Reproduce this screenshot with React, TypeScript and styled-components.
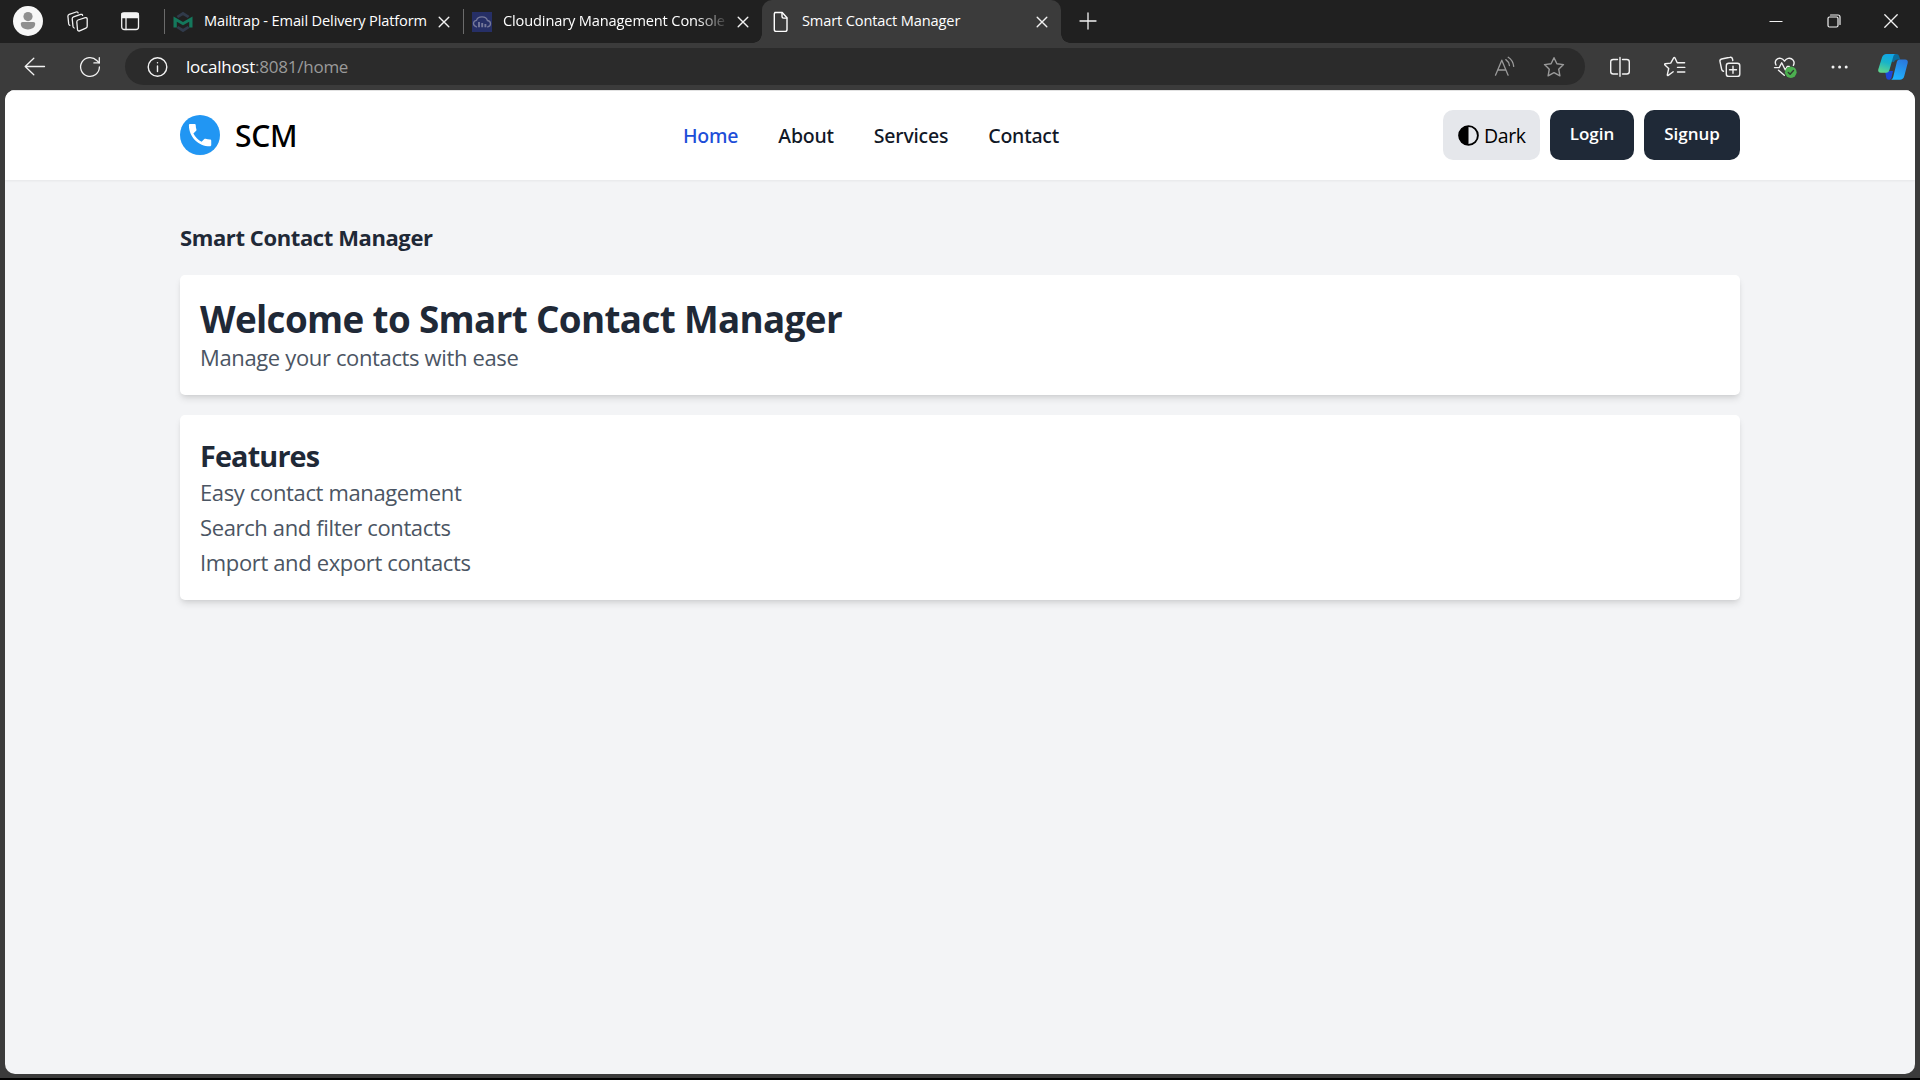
import React from "react";
import styled, { createGlobalStyle } from "styled-components";

const GlobalStyle = createGlobalStyle`
  * { box-sizing: border-box; }
  html, body { margin: 0; padding: 0; background: #000; }
  body { overflow: hidden; font-family: "Open Sans", "Noto Sans", sans-serif; }
  h1, h2, p, ul { margin: 0; padding: 0; font-weight: inherit; }
  button { border: 0; background: none; padding: 0; font: inherit; color: inherit; }
  svg { display: block; flex: none; }
`;

/* ---------- browser window ---------- */

const Window = styled.div`
  width: 1920px;
  height: 1078px;
  display: flex;
  flex-direction: column;
  background: #3b3b3b;
`;

const TabStrip = styled.div`
  display: flex;
  align-items: stretch;
  flex: none;
  height: 43px;
  background: #202020;
  color: #fff;
`;

const Slot = styled.button<{ $w: number }>`
  display: flex;
  align-items: center;
  justify-content: center;
  flex: none;
  width: ${(p) => p.$w}px;
  color: #f2f2f2;
`;

const StripSlot = styled(Slot)`
  padding-bottom: 1px;
`;

const Tabs = styled.div`
  display: flex;
  margin-left: 4px;
`;

const Tab = styled.div<{ $active?: boolean }>`
  position: relative;
  display: flex;
  align-items: center;
  width: 299px;
  padding-left: 7px;
  border-radius: 10px 10px 0 0;
  background: ${(p) => (p.$active ? "#3b3b3b" : "transparent")};

  &::before {
    content: "";
    position: absolute;
    ${(p) =>
      p.$active
        ? `left: -9px; bottom: 0; width: 9px; height: 9px;
           background: radial-gradient(circle at 0 0, transparent 8.5px, #3b3b3b 9px);`
        : `left: 0; top: 9px; width: 1px; height: 25px; background: #6b6b6b;`}
  }
  &::after {
    content: "";
    position: absolute;
    display: ${(p) => (p.$active ? "block" : "none")};
    right: -9px;
    bottom: 0;
    width: 9px;
    height: 9px;
    background: radial-gradient(circle at 100% 0, transparent 8.5px, #3b3b3b 9px);
  }
`;

const TabIcon = styled.span`
  display: flex;
  justify-content: center;
  width: 24px;
  margin-right: 9px;
`;

const TabTitle = styled.span<{ $fade?: boolean }>`
  width: 224px;
  height: 24px;
  overflow: hidden;
  white-space: nowrap;
  font-size: 14.6px;
  line-height: 24px;
  letter-spacing: -0.14px;
  margin-top: -4px;
  ${(p) => p.$fade && `mask-image: linear-gradient(90deg, #000 194px, transparent 226px);`}
`;

const TabClose = styled.button`
  display: flex;
  margin-left: 10px;
  color: #f2f2f2;
`;

const Spacer = styled.div`
  flex: 1;
`;

const Toolbar = styled.div`
  display: flex;
  align-items: stretch;
  flex: none;
  height: 47px;
  padding: 0 2px 0 7px;
`;

const AddressBar = styled.div`
  display: flex;
  align-items: center;
  width: 1460px;
  height: 37px;
  margin: 5px 7px 0 8px;
  padding: 0 6px 0 21px;
  border-radius: 19px;
  background: #2b2b2b;
  color: #f2f2f2;
`;

const Url = styled.span`
  flex: 1;
  margin-left: 16px;
  font-size: 17px;
  line-height: 24px;
  letter-spacing: -0.24px;
  color: #9a9a9a;
  b { font-weight: 400; color: #fff; }
`;

const DimSlot = styled(Slot)`
  color: #9a9a9a;
`;

/* ---------- page ---------- */

const Page = styled.div`
  flex: none;
  height: 984px;
  margin: 0 5px;
  border-radius: 10px;
  overflow: hidden;
  background: #f3f4f6;
`;

const Header = styled.header`
  height: 90px;
  padding: 0 175px;
  display: flex;
  align-items: center;
  justify-content: space-between;
  background: #fff;
  box-shadow: inset 0 1px 0 #e2e2e2, 0 1.25px 2.5px rgba(0, 0, 0, 0.06);
`;

const Brand = styled.div`
  display: flex;
  align-items: center;
  width: 119px;
  gap: 15px;
`;

const BrandName = styled.span`
  font-family: "Noto Sans", sans-serif;
  font-weight: 500;
  font-size: 30px;
  line-height: 40px;
  letter-spacing: -0.3px;
  padding-top: 2px;
  color: #000;
`;

const Nav = styled.nav`
  display: flex;
  gap: 40px;
  padding-top: 2px;
`;

const NavLink = styled.a<{ $active?: boolean }>`
  font-family: "Noto Sans", sans-serif;
  font-weight: 500;
  font-size: 19.5px;
  line-height: 30px;
  letter-spacing: -0.2px;
  color: ${(p) => (p.$active ? "#1d4ed8" : "#111827")};
`;

const Actions = styled.div`
  display: flex;
  gap: 10px;
`;

const ThemeButton = styled.button`
  display: flex;
  align-items: center;
  width: 97px;
  height: 50px;
  padding-left: 15px;
  gap: 5px;
  border-radius: 10px;
  background: #e5e7eb;
  color: #000;
  font-size: 19.5px;
  line-height: 30px;
  letter-spacing: -0.4px;
`;

const ThemeLabel = styled.span`
  padding-top: 1px;
`;

const DarkButton = styled.button<{ $w: number }>`
  width: ${(p) => p.$w}px;
  height: 50px;
  padding-bottom: 3px;
  border-radius: 10px;
  background: #1f2937;
  color: #fff;
  font-weight: 600;
  font-size: 17px;
  line-height: 25px;
`;

const Main = styled.main`
  display: flex;
  flex-direction: column;
  gap: 20px;
  padding: 40px 175px;
  color: #1f2937;
`;

const PageTitle = styled.h1`
  font-weight: 700;
  font-size: 22px;
  line-height: 35px;
  letter-spacing: -0.4px;
`;

const Card = styled.section`
  padding: 20px;
  border-radius: 5px;
  background: #fff;
  box-shadow: 0 5px 7.5px -1.25px rgba(0, 0, 0, 0.1), 0 2.5px 5px -2.5px rgba(0, 0, 0, 0.1);
`;

const Welcome = styled.h1`
  height: 45px;
  font-weight: 700;
  font-size: 36.8px;
  line-height: 49px;
  letter-spacing: -0.64px;
`;

const SectionTitle = styled.h2`
  height: 40px;
  font-weight: 700;
  font-size: 28.8px;
  line-height: 42px;
  letter-spacing: -0.85px;
`;

const Body = styled.p`
  font-size: 22px;
  line-height: 35px;
  letter-spacing: -0.36px;
  color: #4b5563;
`;

/* ---------- icons ---------- */

type IconProps = { size?: number; sw?: number; children: React.ReactNode };
const Icon = ({ size = 24, sw = 1.3, children }: IconProps) => (
  <svg width={size} height={size} viewBox={`0 0 ${size} ${size}`} fill="none" stroke="currentColor" strokeWidth={sw} strokeLinecap="round" strokeLinejoin="round">
    {children}
  </svg>
);

const Avatar = () => (
  <Icon size={30}>
    <g stroke="none">
      <circle cx="15" cy="15" r="15" fill="#f7f7f7" />
      <circle cx="15" cy="10.6" r="4.6" fill="#8f8f8f" />
      <path d="M9.6 16h10.8c1 0 1.8.8 1.8 1.8 0 3.6-3.2 5.7-7.2 5.7s-7.2-2.1-7.2-5.7c0-1 .8-1.8 1.8-1.8z" fill="#8f8f8f" />
    </g>
  </Icon>
);

const Workspaces = () => (
  <Icon>
    <path d="M12 11l7.400-2.300c1-.3 1.800.3 1.800 1.300v7.200c0 .9-.5 1.600-1.300 1.900l-6.300 2.700c-1.100.5-2.100-.2-2.100-1.300l-.7-7.500c0-1 .4-1.700 1.200-2z" />
    <path d="M8.200 19c-.7-.2-1.100-.8-1.200-1.500L6.200 9.700c0-.9.400-1.600 1.300-1.900l7.200-2.400c.9-.3 1.700.1 1.900.9" />
    <path d="M3.900 16.400c-.7-.2-1.100-.8-1.200-1.500L1.900 7.200c0-.9.400-1.600 1.300-1.900l7-2.300c.9-.3 1.700.1 1.900.9" />
  </Icon>
);

const TabActions = () => (
  <Icon>
    <rect x="3.7" y="4" width="16.8" height="16.5" rx="2.5" />
    <path d="M4 4.5h16.2V8.5H4z" fill="currentColor" />
    <path d="M8 8.5v12" />
  </Icon>
);

const Mailtrap = () => (
  <Icon size={22}>
    <g stroke="none">
      <path d="M4.5 5L11 .8 17.500 5l-1.700 2L11 4.300 6.200 7z" fill="#303a4a" />
      <path d="M4.500 17L11 21.200l6.500-4.200-1.700-2L11 17.700 6.200 15z" fill="#303a4a" />
      <path d="M1.500 5.500L11 11l9.500-5.500v11h-3.300v-5.700L11 14.300l-6.200-3.500v5.700H1.500z" fill="#14785c" />
    </g>
  </Icon>
);

const Cloudinary = () => (
  <Icon size={20}>
    <rect width="20" height="20" fill="#262f66" stroke="none" />
    <path d="M4.500 14.800c-2-.5-3-1.700-3-3.200 0-1.800 1.300-3.100 3-3.300C5 6.200 7.200 4.800 10 4.800s4.800 1.500 5.400 3.700c1.900.2 3.100 1.500 3.100 3.200 0 1.500-1 2.700-2.800 3.100" stroke="#76799a" />
    <path d="M7 10v5.200M10.200 11v4.200M13.400 12v3.200" stroke="#76799a" strokeWidth="1.900" strokeLinecap="butt" />
  </Icon>
);

const FileIcon = () => (
  <Icon size={22} sw={1.4}>
    <path d="M4.800 1.500h7.400l4.800 5.300v11.700c0 1-.7 1.900-1.900 1.900H6.200c-1.200 0-1.900-.8-1.900-1.900V3.200c0-.9.500-1.700 1.400-1.700z" />
    <path d="M12 1.800V5.600c0 .9.500 1.500 1.500 1.500h3.300" />
  </Icon>
);

const CloseX = () => (
  <Icon size={12} sw={1.4}>
    <path d="M1.200 1.200l9.600 9.600M10.800 1.200l-9.600 9.600" />
  </Icon>
);

const Copilot = () => (
  <svg width="32" height="32" viewBox="0 0 32 32">
    <defs>
      <linearGradient id="cpLeft" x1="0.6" y1="0" x2="0.3" y2="1">
        <stop offset="0" stopColor="#10a5e8" />
        <stop offset="0.45" stopColor="#19b4c8" />
        <stop offset="1" stopColor="#5fd68c" />
      </linearGradient>
      <linearGradient id="cpRight" x1="0.7" y1="0" x2="0.3" y2="1">
        <stop offset="0" stopColor="#2a78dd" />
        <stop offset="1" stopColor="#1fb6ff" />
      </linearGradient>
    </defs>
    <path d="M15 3h4.2c1.6 0 2.5.8 3 2.400l1 3.200h-2.400c-1.900 0-3.200.8-3.900 2.600L13 10z" fill="#0b6c9c" />
    <path d="M8 20h8l-1.500 6.500c-.4 1.500-1.300 2.300-2.700 2.300s-2.200-.8-2.600-2.200z" fill="#1c47d8" />
    <path d="M9.500 3h9.200c-1.400.2-2 1.200-2.500 2.800l-3.700 13c-.5 1.900-1.500 3-3.500 3H4c-2.300 0-3.200-1.500-2.700-3.500L5 6.500C5.700 4.200 7.200 3 9.500 3z" fill="url(#cpLeft)" />
    <path d="M22.800 8.500h5.200c2.300 0 3.200 1.500 2.700 3.500L27.300 25c-.6 2.500-2.200 3.800-4.500 3.800h-9c1.300-.3 2-1.300 2.400-2.800l3.500-14.500c.5-1.900 1.300-3 3.100-3z" fill="url(#cpRight)" />
  </svg>
);

const tabs = [
  { title: "Mailtrap - Email Delivery Platform", icon: <Mailtrap /> },
  { title: "Cloudinary Management Console", icon: <Cloudinary />, fade: true },
  { title: "Smart Contact Manager", icon: <FileIcon />, active: true },
];

const links = ["Home", "About", "Services", "Contact"];
const features = ["Easy contact management", "Search and filter contacts", "Import and export contacts"];

export default function App() {
  return (
    <Window>
      <GlobalStyle />
      <TabStrip>
        <StripSlot $w={56}><Avatar /></StripSlot>
        <StripSlot $w={43}><Workspaces /></StripSlot>
        <StripSlot $w={61}><TabActions /></StripSlot>
        <Tabs>
          {tabs.map((t) => (
            <Tab key={t.title} $active={t.active}>
              <TabIcon>{t.icon}</TabIcon>
              <TabTitle $fade={t.fade}>{t.title}</TabTitle>
              <TabClose><CloseX /></TabClose>
            </Tab>
          ))}
        </Tabs>
        <StripSlot $w={54}>
          <Icon size={18}><path d="M9 1v16M1 9h16" /></Icon>
        </StripSlot>
        <Spacer />
        <StripSlot $w={57.5}>
          <Icon size={14}><path d="M.5 7.500h13" strokeWidth="1" strokeLinecap="butt" /></Icon>
        </StripSlot>
        <StripSlot $w={57.5}>
          <Icon size={14} sw={1.2}>
            <rect x="1" y="3" width="10" height="10" rx="1.5" />
            <path d="M3.5 1h7.500c1.200 0 2 .8 2 2v7.500" />
          </Icon>
        </StripSlot>
        <StripSlot $w={57.5}>
          <Icon size={14}><path d="M.8.8l12.400 12.400M13.200.8L.8 13.200" /></Icon>
        </StripSlot>
      </TabStrip>

      <Toolbar>
        <Slot $w={55}>
          <Icon><path d="M21.5 11.500H2.300M10.800 3.200l-8.600 8.300 8.600 8.300" /></Icon>
        </Slot>
        <Slot $w={55}>
          <Icon>
            <path d="M21.4 12a9.400 9.400 0 1 1-2.600-6.500l2.400 2.300" />
            <path d="M21.3 2.700v5.200h-5.400" />
          </Icon>
        </Slot>
        <AddressBar>
          <Icon sw={1.4}>
            <circle cx="11.5" cy="12" r="9.3" />
            <path d="M11.5 11v5.500M11.5 7.600v.2" />
          </Icon>
          <Url><b>localhost</b>:8081/home</Url>
          <DimSlot $w={50}>
            <Icon>
              <path d="M3.500 20.200L9.800 5.200l6.300 15M5.800 15h8" />
              <path d="M13.800 4.600c2 1.300 3.200 3.200 3.600 5.900M16.200 2.300c3.200 2 5 5 5.500 9" />
            </Icon>
          </DimSlot>
          <DimSlot $w={50}>
            <Icon sw={1.4}>
              <path d="M12 2.700l2.900 6 6.600.9-4.800 4.600 1.200 6.600-5.900-3.200-5.900 3.200 1.200-6.600L2.500 9.600l6.600-.9z" />
            </Icon>
          </DimSlot>
        </AddressBar>
        <Slot $w={55.2}>
          <Icon sw={1.4}>
            <path d="M9.500 4.500H5.200c-1.500 0-2.500 1-2.500 2.500v9.500c0 1.500 1 2.500 2.500 2.500h4.300M14.500 4.500h4.300c1.500 0 2.500 1 2.500 2.500v9.500c0 1.500-1 2.500-2.500 2.500h-4.300M12 2.500v18.800" />
          </Icon>
        </Slot>
        <Slot $w={55.2}>
          <Icon sw={1.4}>
            <path d="M10.200 16.800l-5 3.600c-.5.3-1 0-.9-.6l1.400-6.300-3.800-3.600c-.5-.4-.2-1 .3-1.100l5.500-.7 3-5.300c.3-.5.9-.5 1.200 0l2.300 4.900h7.400M14.500 12.400h7.300M14.500 17h7.300" />
          </Icon>
        </Slot>
        <Slot $w={55.2}>
          <Icon sw={1.4}>
            <path d="M5.500 16.300c-1-.2-1.600-.9-1.800-1.800L2 6.700c-.3-1.300.3-2.400 1.600-2.700l8.300-1.700c1.300-.3 2.300.4 2.600 1.700l.3 1.500" />
            <rect x="8.3" y="8.2" width="13.5" height="13.2" rx="2.5" />
            <path d="M15 11.3v7M11.5 14.800h7" />
          </Icon>
        </Slot>
        <Slot $w={55.2}>
          <Icon size={26} sw={1.4}>
            <path d="M4 11C1.800 6.500 5.500 3.700 8.800 4.400c1.700.4 2.900 1.600 3.700 2.700.8-1.100 2-2.300 3.700-2.700 4-.8 7.300 3 5.200 7M2.500 13.600h4.700l2.500-4.800 3.600 7.200 2-3.600h2M6.500 16.200l5.800 5.100" />
            <circle cx="18.8" cy="18.2" r="5.8" fill="#4caf50" stroke="none" />
            <path d="M16.300 18.500l1.800 1.700 3.400-3.600" stroke="#2f3b30" />
          </Icon>
        </Slot>
        <Slot $w={55.2}>
          <Icon>
            <g fill="currentColor" stroke="none">
              <circle cx="5" cy="12" r="1.5" /><circle cx="11.6" cy="12" r="1.5" /><circle cx="18.2" cy="12" r="1.5" />
            </g>
          </Icon>
        </Slot>
        <Slot $w={50}><Copilot /></Slot>
      </Toolbar>

      <Page>
        <Header>
          <Brand>
            <svg width="40" height="42" viewBox="0 0 40 42">
              <circle cx="20" cy="22" r="19.6" fill="#000" opacity="0.07" />
              <circle cx="20" cy="21" r="20" fill="#2196f3" />
              <path transform="translate(5.2 6.2) scale(1.24)" fill="#fff" d="M6.62 10.79c1.44 2.83 3.76 5.14 6.59 6.59l2.2-2.2c.27-.27.67-.36 1.02-.24 1.12.37 2.33.57 3.57.57.55 0 1 .45 1 1V20c0 .55-.45 1-1 1-9.39 0-17-7.61-17-17 0-.55.45-1 1-1h3.5c.55 0 1 .45 1 1 0 1.25.2 2.45.57 3.57.11.35.03.74-.25 1.02l-2.2 2.2z" />
            </svg>
            <BrandName>SCM</BrandName>
          </Brand>
          <Nav>
            {links.map((l, i) => (
              <NavLink key={l} $active={i === 0}>{l}</NavLink>
            ))}
          </Nav>
          <Actions>
            <ThemeButton>
              <svg width="21" height="21" viewBox="0 0 21 21">
                <circle cx="10.5" cy="10.5" r="9.4" fill="none" stroke="#000" strokeWidth="1.9" />
                <path d="M10.5 1v19a9.500 9.500 0 0 1 0-19z" />
              </svg>
              <ThemeLabel>Dark</ThemeLabel>
            </ThemeButton>
            <DarkButton $w={84}>Login</DarkButton>
            <DarkButton $w={96}>Signup</DarkButton>
          </Actions>
        </Header>
        <Main>
          <PageTitle>Smart Contact Manager</PageTitle>
          <Card>
            <Welcome>Welcome to Smart Contact Manager</Welcome>
            <Body>Manage your contacts with ease</Body>
          </Card>
          <Card>
            <SectionTitle>Features</SectionTitle>
            {features.map((f) => (
              <Body key={f}>{f}</Body>
            ))}
          </Card>
        </Main>
      </Page>
    </Window>
  );
}
